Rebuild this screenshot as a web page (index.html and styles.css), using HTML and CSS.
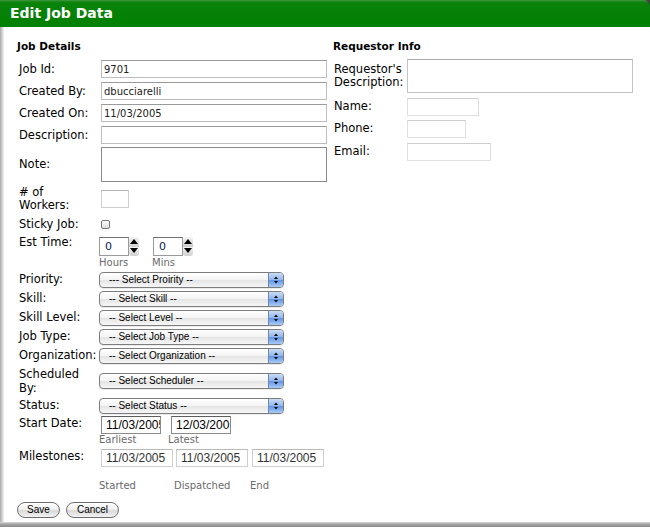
FILE: index.html
```html
<!DOCTYPE html>
<html>
<head>
<meta charset="utf-8">
<title>Edit Job Data</title>
<link rel="stylesheet" href="styles.css">
</head>
<body>
<div class="dialog">
  <div class="top">
    <div class="titlebar"><h1>Edit Job Data</h1></div>
  </div>
  <div class="main">
    <section class="col-left">
      <h2>Job Details</h2>
      <div class="row r-text"><label>Job Id:</label><input class="txt wide" value="9701"></div>
      <div class="row r-text"><label>Created By:</label><input class="txt wide" value="dbucciarelli"></div>
      <div class="row r-text"><label>Created On:</label><input class="txt wide" value="11/03/2005"></div>
      <div class="row r-text"><label>Description:</label><input class="txt wide" value=""></div>
      <div class="row r-note"><label>Note:</label><textarea class="note"></textarea></div>
      <div class="row r-workers"><label class="two">#&nbsp;of<br>Workers:</label><input class="txt workers" value=""></div>
      <div class="row r-sticky"><label>Sticky Job:</label><input type="checkbox" class="check"></div>
      <div class="row r-est">
        <label class="top-label">Est Time:</label>
        <div class="spins">
          <div class="spin"><input class="spin-in" value="0"><span class="spin-btn"><svg width="10" height="19" viewBox="0 0 10 19"><path d="M5 2 L9 7 L1 7 Z" fill="#000"/><path d="M1 11 L9 11 L5 16 Z" fill="#000"/></svg></span></div>
          <div class="spin"><input class="spin-in" value="0"><span class="spin-btn"><svg width="10" height="19" viewBox="0 0 10 19"><path d="M5 2 L9 7 L1 7 Z" fill="#000"/><path d="M1 11 L9 11 L5 16 Z" fill="#000"/></svg></span></div>
        </div>
      </div>
      <div class="sub sub-est"><span class="s-hours">Hours</span><span>Mins</span></div>

      <div class="row r-sel"><label>Priority:</label><div class="sel"><span class="sel-text">--- Select Proirity --</span><span class="sel-btn"><svg width="14" height="14" viewBox="0 0 14 14"><path d="M5 6 L9 6 L7 3.5 Z" fill="#000"/><path d="M5 8 L9 8 L7 10.5 Z" fill="#000"/></svg></span></div></div>
      <div class="row r-sel"><label>Skill:</label><div class="sel"><span class="sel-text">-- Select Skill --</span><span class="sel-btn"><svg width="14" height="14" viewBox="0 0 14 14"><path d="M5 6 L9 6 L7 3.5 Z" fill="#000"/><path d="M5 8 L9 8 L7 10.5 Z" fill="#000"/></svg></span></div></div>
      <div class="row r-sel"><label>Skill Level:</label><div class="sel"><span class="sel-text">-- Select Level --</span><span class="sel-btn"><svg width="14" height="14" viewBox="0 0 14 14"><path d="M5 6 L9 6 L7 3.5 Z" fill="#000"/><path d="M5 8 L9 8 L7 10.5 Z" fill="#000"/></svg></span></div></div>
      <div class="row r-sel"><label>Job Type:</label><div class="sel"><span class="sel-text">-- Select Job Type --</span><span class="sel-btn"><svg width="14" height="14" viewBox="0 0 14 14"><path d="M5 6 L9 6 L7 3.5 Z" fill="#000"/><path d="M5 8 L9 8 L7 10.5 Z" fill="#000"/></svg></span></div></div>
      <div class="row r-sel"><label>Organization:</label><div class="sel"><span class="sel-text">-- Select Organization --</span><span class="sel-btn"><svg width="14" height="14" viewBox="0 0 14 14"><path d="M5 6 L9 6 L7 3.5 Z" fill="#000"/><path d="M5 8 L9 8 L7 10.5 Z" fill="#000"/></svg></span></div></div>
      <div class="row r-sched"><label class="two2">Scheduled<br>By:</label><div class="sel"><span class="sel-text">-- Select Scheduler --</span><span class="sel-btn"><svg width="14" height="14" viewBox="0 0 14 14"><path d="M5 6 L9 6 L7 3.5 Z" fill="#000"/><path d="M5 8 L9 8 L7 10.5 Z" fill="#000"/></svg></span></div></div>
      <div class="row r-sel"><label>Status:</label><div class="sel"><span class="sel-text">-- Select Status --</span><span class="sel-btn"><svg width="14" height="14" viewBox="0 0 14 14"><path d="M5 6 L9 6 L7 3.5 Z" fill="#000"/><path d="M5 8 L9 8 L7 10.5 Z" fill="#000"/></svg></span></div></div>

      <div class="row r-date">
        <label class="date-label">Start Date:</label>
        <div class="dates"><input class="date" value="11/03/2005"><input class="date" value="12/03/2005"></div>
      </div>
      <div class="sub sub-date"><span class="s-earliest">Earliest</span><span>Latest</span></div>

      <div class="row r-mile">
        <label class="date-label">Milestones:</label>
        <div class="miles"><input class="mile" value="11/03/2005"><input class="mile" value="11/03/2005"><input class="mile" value="11/03/2005"></div>
      </div>
      <div class="sub sub-mile"><span class="s-started">Started</span><span class="s-disp">Dispatched</span><span>End</span></div>

      <div class="buttons"><button class="btn btn-save">Save</button><button class="btn btn-cancel">Cancel</button></div>
    </section>

    <section class="col-right">
      <h2>Requestor Info</h2>
      <div class="row r-rdesc"><label class="two">Requestor's<br>Description:</label><textarea class="rdesc"></textarea></div>
      <div class="row r-rin r-name"><label>Name:</label><input class="rtxt name" value=""></div>
      <div class="row r-rin r-phone"><label>Phone:</label><input class="rtxt phone" value=""></div>
      <div class="row r-rin r-email"><label>Email:</label><input class="rtxt email" value=""></div>
    </section>
  </div>
  <div class="bottom"></div>
</div>
</body>
</html>
```

FILE: styles.css
```css
html, body {
  margin: 0;
  padding: 0;
}

body {
  width: 650px;
  height: 527px;
  overflow: hidden;
  background: #fff;
  font-family: "DejaVu Sans", Verdana, sans-serif;
  color: #000;
}

.dialog {
  height: 527px;
  display: flex;
  flex-direction: column;
}

.top {
  background: linear-gradient(to left, #3a3a3a, #6a6a6a 8px, #fff 9px);
}

.titlebar {
  height: 27px;
  background: linear-gradient(#4d9e4d 0, #1f8a1f 1px, #0a820a 3px, #008000 100%);
  border-top-right-radius: 7px;
}

h1 {
  margin: 0;
  padding-left: 10px;
  font-family: "DejaVu Sans", Verdana, sans-serif;
  font-weight: bold;
  font-size: 14px;
  line-height: 27px;
  color: #fff;
}

.main {
  flex: 1;
  display: flex;
  padding-left: 4px;
  background: linear-gradient(to right, #a8a8a8, #cfcfcf 2px, #e2e2e2 3px, #f2f2f2 4px) 0 0 / 4px 100% no-repeat, #fff;
}

.bottom {
  height: 5px;
  background: linear-gradient(#dadada, #a8a8a8 2px, #8a8a8a);
}

h2 {
  margin: 12px 0 5px 0;
  font-size: 10.5px;
  line-height: 14px;
  font-weight: bold;
}

.col-left {
  margin-left: 13px;
  width: 312px;
  display: flex;
  flex-direction: column;
}

.col-right {
  margin-left: 4px;
  width: 300px;
  display: flex;
  flex-direction: column;
}

.row {
  display: flex;
  align-items: center;
}

.row label {
  font-size: 11.5px;
  line-height: 13px;
  white-space: nowrap;
}

.col-left .row label {
  width: 82px;
  flex: none;
  padding-left: 2px;
}

.col-right .row label {
  width: 73px;
  flex: none;
  padding-left: 1px;
}

.txt, .note, .date, .mile, .rtxt, .rdesc, .spin-in {
  box-sizing: border-box;
  margin: 0;
  outline: none;
  background: #fff;
}

.txt {
  height: 18px;
  border: 1px solid #bdbdbd;
  border-top-color: #9a9a9a;
  padding: 0 2px;
  font-family: "DejaVu Sans", Verdana, sans-serif;
  font-size: 10px;
  color: #222;
}

.wide { width: 226px; }

.r-text { height: 22px; }

.r-note { height: 37px; }

.note {
  width: 226px;
  height: 35px;
  border: 1px solid #8a8a8a;
  resize: none;
  padding: 0;
}

.r-workers { height: 31px; }

.workers {
  width: 28px;
  border-color: #cfcfcf;
  border-top-color: #b5b5b5;
}

.r-sticky { height: 20px; }

.check {
  appearance: none;
  -webkit-appearance: none;
  width: 9px;
  height: 9px;
  margin: 0;
  border: 1px solid #777;
  border-radius: 2px;
  background: linear-gradient(#ffffff, #dcdcdc);
  box-sizing: border-box;
}

.r-est {
  height: 22px;
  align-items: flex-start;
}

.top-label { margin-top: 2px; }

.spins {
  display: flex;
  gap: 14px;
  margin-top: 3px;
  margin-left: -2px;
}

.spin {
  display: flex;
  height: 19px;
}

.spin-in {
  width: 30px;
  height: 19px;
  border: 1px solid #9a9a9a;
  border-top-color: #6f6f6f;
  padding: 0 0 0 5px;
  font-family: "DejaVu Sans", Verdana, sans-serif;
  font-size: 11px;
  color: #0a1a4a;
}

.spin-btn {
  width: 10px;
  height: 19px;
  display: block;
  background: linear-gradient(#f4f4f4, #cfcfcf 50%, #f4f4f4 52%, #cfcfcf);
  border-radius: 3px;
}

.spin-btn svg { display: block; }

.sub {
  display: flex;
  font-size: 10px;
  line-height: 12px;
  color: #6a6a6a;
  padding-left: 82px;
}

.sub-est { margin-top: 1px; }
.s-hours { width: 53px; }

.r-sel { height: 19px; }
.sub-est + .r-sel { margin-top: 1px; }

.r-sched { height: 31px; }

.two2 { line-height: 14px !important; }

.sel {
  margin-left: -2px;
  width: 185px;
  height: 16px;
  box-sizing: border-box;
  display: flex;
  border: 1px solid #7d7d7d;
  border-radius: 4px;
  background: linear-gradient(#ffffff, #f3f3f3 50%, #e4e4e4 51%, #f6f6f6);
  overflow: hidden;
  box-shadow: 0 1px 0 rgba(0,0,0,0.08);
}

.sel-text {
  flex: 1;
  padding-left: 9px;
  font-family: "Liberation Sans", Arial, sans-serif;
  font-size: 10px;
  line-height: 14px;
  color: #000;
  white-space: nowrap;
}

.sel-btn {
  width: 14px;
  border-left: 1px solid #6f86b5;
  background: linear-gradient(#c9dcf6, #8fb6ec 50%, #5f94e4 51%, #a9cbf7);
  display: flex;
  align-items: center;
  justify-content: center;
}

.sel-btn svg { display: block; }

.r-date, .r-mile {
  height: 19px;
  align-items: flex-start;
}

.date-label { line-height: 16px !important; }

.dates, .miles {
  display: flex;
  margin-top: 1px;
}

.dates { gap: 10px; }
.miles { gap: 3px; }

.date {
  width: 60px;
  height: 18px;
  border: 1px solid #8a8a8a;
  border-top-color: #5e5e5e;
  padding: 0 0 0 4px;
  font-family: "Liberation Sans", Arial, sans-serif;
  font-size: 12px;
  color: #000;
}

.mile {
  width: 72px;
  height: 18px;
  border: 1px solid #cfcfcf;
  border-top-color: #b9b9b9;
  padding: 0 0 0 4px;
  font-family: "Liberation Sans", Arial, sans-serif;
  font-size: 12px;
  color: #333;
}

.miles .mile:last-child { margin-left: 1px; }

.s-earliest { width: 69px; }

.r-mile { margin-top: 2px; }

.sub-mile { margin-top: 13px; }
.s-started { width: 75px; }
.s-disp { width: 76px; }

.buttons {
  display: flex;
  gap: 6px;
  margin-top: 10px;
}

.btn {
  height: 16px;
  padding: 0;
  border: 1px solid #6e6e6e;
  border-radius: 8px;
  background: linear-gradient(#ffffff, #f0f0f0 45%, #d9d9d9 55%, #f3f3f3);
  font-family: "Liberation Sans", Arial, sans-serif;
  font-size: 10px;
  line-height: 14px;
  color: #000;
  box-sizing: border-box;
}

.btn-save { width: 43px; }
.btn-cancel { width: 53px; }

.r-rdesc { height: 35px; }

.rdesc {
  width: 226px;
  height: 34px;
  border: 1px solid #c4c4c4;
  border-top-color: #a9a9a9;
  resize: none;
  padding: 0;
}

.r-rin { height: 19px; }
.r-name { margin-top: 4px; }
.r-phone { margin-top: 3px; }
.r-email { margin-top: 4px; }

.rtxt {
  height: 18px;
  border: 1px solid #e0e0e0;
  border-top-color: #cdcdcd;
  padding: 0 2px;
}

.name { width: 72px; }
.phone { width: 59px; }
.email { width: 84px; }
```
